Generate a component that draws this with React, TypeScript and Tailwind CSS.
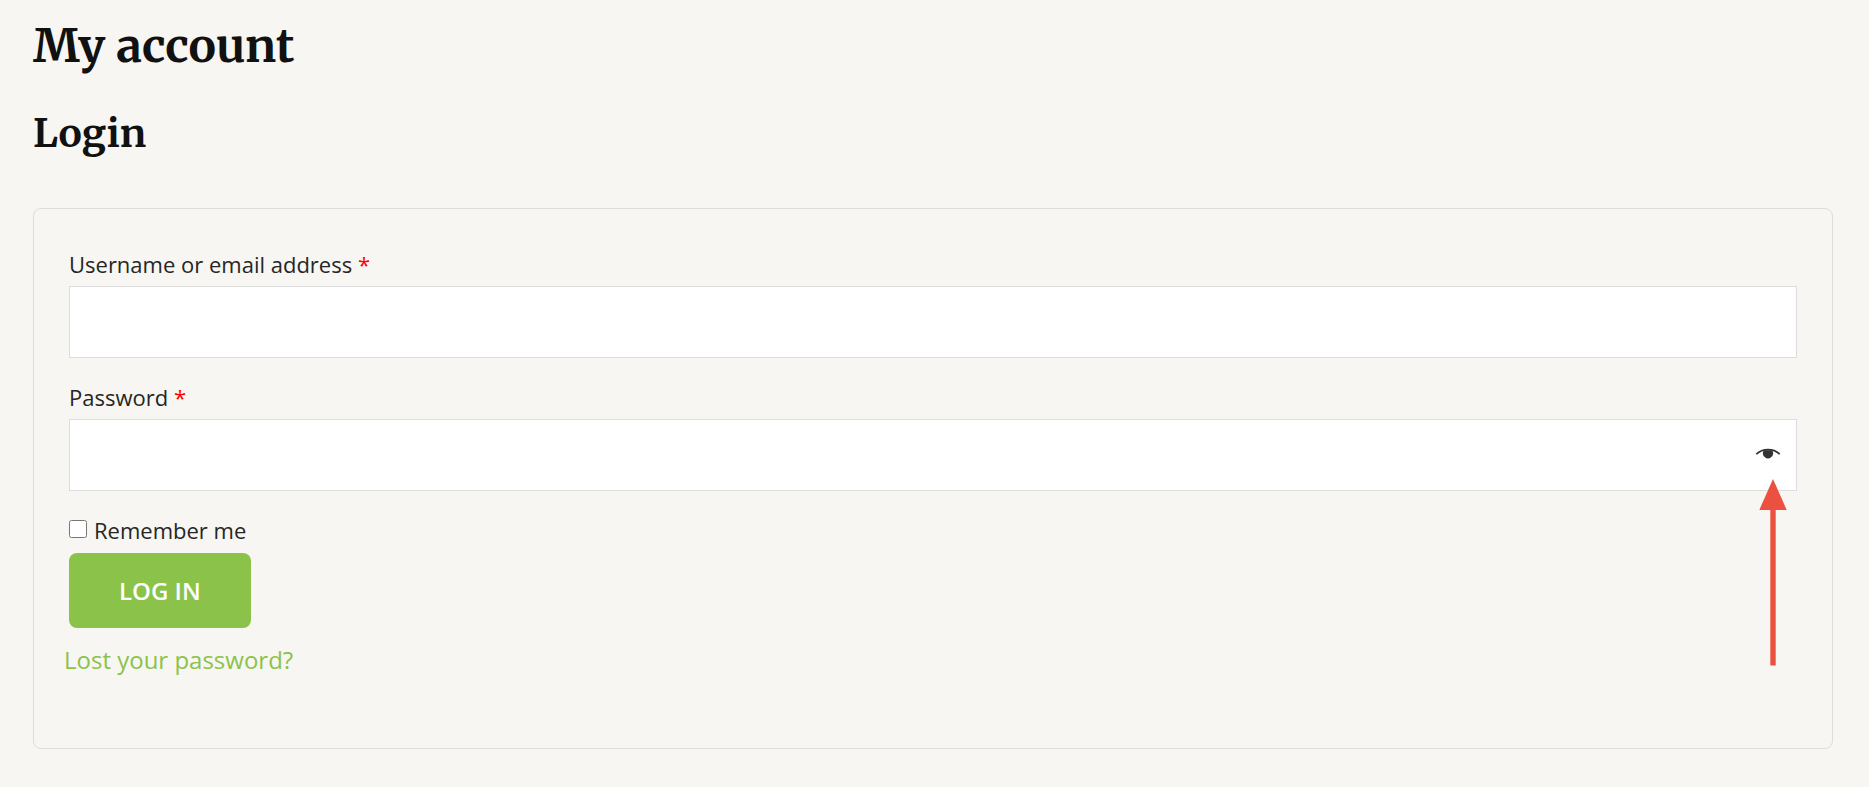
import { useState } from "react";

const labelClass = "block mb-[5px] text-[22px] leading-[33px] font-medium text-[#262626]";
const inputClass =
  "block w-full h-18 px-4 border border-[#dddddd] bg-white text-[22px] text-[#333333] outline-none focus:border-[#8bc34a]";

function EyeIcon() {
  return (
    <svg width="26" height="16" viewBox="0 0 26 16" fill="none" aria-hidden="true">
      <path d="M1.3 7.2C4.5 4.2 8.5 2.7 13 2.7s8.500 1.500 11.700 4.500" stroke="#333333" strokeWidth="1.7" />
      <path d="M9 3.300h8a5 5 0 1 1-8 0z" fill="#333333" />
    </svg>
  );
}

function Arrow() {
  return (
    <svg
      className="absolute right-2.5 top-15 pointer-events-none"
      width="28"
      height="187"
      viewBox="0 0 28 187"
      fill="#eb5040"
      aria-hidden="true"
    >
      <path d="M14 0L27.700 31H0.300z" />
      <rect x="11.300" y="30" width="5.400" height="156.500" />
    </svg>
  );
}

function Required() {
  return <span className="text-[#ff0000]">*</span>;
}

export default function App() {
  const [visible, setVisible] = useState(false);

  return (
    <main className="min-h-screen bg-[#f7f6f2] pt-3.5 pb-9 pl-[33px] pr-9 font-['Open_Sans','Noto_Sans',sans-serif]">
      <h1 className="font-['Merriweather','Liberation_Serif',serif] font-bold text-[46px] leading-16 text-[#111111]">
        My account
      </h1>
      <h2 className="mt-7 font-['Merriweather','Liberation_Serif',serif] font-bold text-[39px] leading-14 text-[#111111]">
        Login
      </h2>

      <form
        className="mt-[46px] border border-[#dddddd] rounded-lg pt-[39px] pb-[70px] pl-[30px] pr-[35px]"
        onSubmit={(e) => e.preventDefault()}
      >
        <div className="flex flex-col gap-[23px] pl-[5px]">
          <div>
            <label htmlFor="username" className={labelClass}>
              Username or email address <Required />
            </label>
            <input id="username" type="text" autoComplete="username" className={inputClass} />
          </div>

          <div>
            <label htmlFor="password" className={labelClass}>
              Password <Required />
            </label>
            <div className="relative">
              <input
                id="password"
                type={visible ? "text" : "password"}
                autoComplete="current-password"
                className={inputClass}
              />
              <button
                type="button"
                aria-label="Show password"
                onClick={() => setVisible(!visible)}
                className="absolute right-4 inset-y-0 flex items-center cursor-pointer"
              >
                <EyeIcon />
              </button>
              <Arrow />
            </div>
          </div>

          <div>
            <label className="flex items-start gap-[7px] mb-1.5 text-[22px] leading-[33px] font-medium text-[#262626]">
              <input type="checkbox" className="size-[18px] mt-1.5" />
              Remember me
            </label>
            <button
              type="submit"
              className="block h-[75px] px-[50px] rounded-lg bg-[#8bc34a] hover:bg-[#7cb33c] text-white text-2xl font-semibold uppercase cursor-pointer"
            >
              Log in
            </button>
          </div>
        </div>

        <p className="mt-3.5 text-2xl leading-9">
          <a href="#lost-password" className="text-[#8bc34a] hover:underline">
            Lost your password?
          </a>
        </p>
      </form>
    </main>
  );
}
